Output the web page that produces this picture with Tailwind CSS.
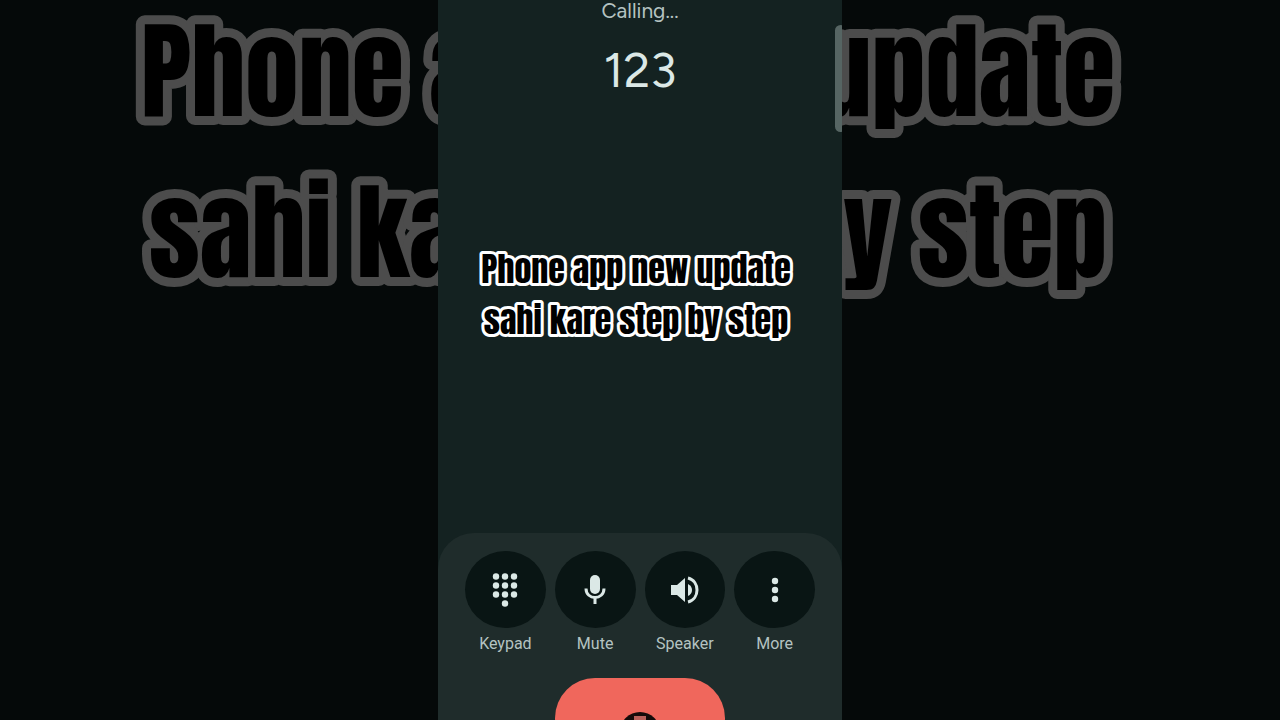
<!DOCTYPE html>
<html lang="en">
<head>
<meta charset="utf-8">
<meta name="viewport" content="width=device-width, initial-scale=1">
<title>Calling 123</title>
<script src="https://cdn.jsdelivr.net/npm/@tailwindcss/browser@4"></script>
</head>
<body class="bg-[#050909]">
<main class="relative flex h-screen justify-center overflow-hidden font-['Roboto',sans-serif]">
  <!-- Enlarged, dimmed caption behind the phone -->
  <svg aria-hidden="true" class="absolute inset-x-0 top-0 h-80 w-full fill-black stroke-[#4c4c4c] stroke-[18px] font-['Anton','Liberation_Sans_Narrow',sans-serif] text-[107px] [paint-order:stroke]" viewBox="0 0 1280 320" text-anchor="middle" stroke-linejoin="round">
    <text x="628" y="116">Phone app new update</text>
    <text x="628" y="277">sahi kare step by step</text>
  </svg>

  <section class="relative flex w-[404px] flex-col overflow-hidden bg-[#142221]">
    <header class="flex flex-col items-center">
      <p class="font-['Google_Sans','Product_Sans','Figtree','Lato',sans-serif] text-[21px] leading-[22px] text-[#b4c3c1]">Calling...</p>
      <h1 class="mt-4 font-['Google_Sans','Product_Sans','Figtree','Lato',sans-serif] text-[48px] leading-[64px] text-[#dbe8e6]">123</h1>
    </header>
    <div class="absolute top-[25px] -right-1 h-[107px] w-[11px] rounded-md bg-[#566563]"></div>

    <svg class="mt-[138px] h-[120px] w-full shrink-0 fill-black stroke-white stroke-[6px] font-['Anton','Liberation_Sans_Narrow',sans-serif] text-[34px] [paint-order:stroke]" viewBox="0 0 404 120" text-anchor="middle" stroke-linejoin="round">
      <text x="198" y="43">Phone app new update</text>
      <text x="198" y="94">sahi kare step by step</text>
    </svg>

    <div class="mt-auto flex h-[187px] shrink-0 flex-col items-center rounded-t-[36px] bg-[#1f2c2b] px-[27px] pt-[18px]">
      <div class="grid w-full grid-cols-4 gap-[9px] text-[16px] leading-6 text-[#b4c3c1]">
        <button class="flex flex-col items-center gap-1">
          <span class="flex h-[77px] w-full items-center justify-center rounded-[50%] bg-[#091514] text-[#dbe8e6]">
            <svg class="h-9 w-7" viewBox="0 0 28 36" fill="currentColor"><circle cx="5" cy="4.500" r="3.2"/><circle cx="14" cy="4.500" r="3.2"/><circle cx="23" cy="4.500" r="3.2"/><circle cx="5" cy="13.500" r="3.2"/><circle cx="14" cy="13.500" r="3.2"/><circle cx="23" cy="13.500" r="3.2"/><circle cx="5" cy="22.500" r="3.2"/><circle cx="14" cy="22.500" r="3.2"/><circle cx="23" cy="22.500" r="3.2"/><circle cx="14" cy="31.500" r="3.2"/></svg>
          </span>
          Keypad
        </button>
        <button class="flex flex-col items-center gap-1">
          <span class="flex h-[77px] w-full items-center justify-center rounded-[50%] bg-[#091514] text-[#dbe8e6]">
            <svg class="h-8 w-6" viewBox="0 0 24 32" fill="none"><rect x="7" y="1" width="10" height="19" rx="5" fill="currentColor"/><path d="M3 14.500C3 26.500 21 26.500 21 14.500M12 23V30" stroke="currentColor" stroke-width="3"/></svg>
          </span>
          Mute
        </button>
        <button class="flex flex-col items-center gap-1">
          <span class="flex h-[77px] w-full items-center justify-center rounded-[50%] bg-[#091514] text-[#dbe8e6]">
            <svg class="h-7 w-7" viewBox="0 0 28 28" fill="none"><path d="M0 9H6L14 2V26L6 19H0Z" fill="currentColor"/><path d="M17 8Q21 10 21 14T17 20Z" fill="currentColor"/><path d="M17 2C29 5 29 23 17 26" stroke="currentColor" stroke-width="3"/></svg>
          </span>
          Speaker
        </button>
        <button class="flex flex-col items-center gap-1">
          <span class="flex h-[77px] w-full items-center justify-center rounded-[50%] bg-[#091514] text-[#dbe8e6]">
            <svg class="h-7 w-3" viewBox="0 0 12 28" fill="currentColor"><circle cx="6" cy="5" r="3.2"/><circle cx="6" cy="14" r="3.2"/><circle cx="6" cy="23" r="3.2"/></svg>
          </span>
          More
        </button>
      </div>
      <button aria-label="End call" class="mt-[22px] flex h-20 w-[170px] shrink-0 justify-center rounded-[40px] bg-[#f0675c] pt-[34px]">
        <svg class="h-10 w-10" viewBox="0 0 40 40"><circle cx="20" cy="20" r="20" fill="#160b0a"/><rect x="14" y="4" width="12" height="20" fill="#b9605a"/></svg>
      </button>
    </div>
  </section>
</main>
</body>
</html>
